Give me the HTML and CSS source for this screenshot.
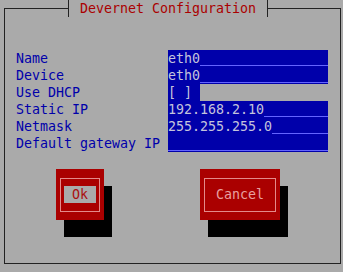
FILE: index.html
```html
<!DOCTYPE html>
<html lang="en">
<head>
    <meta charset="UTF-8">
    <meta name="viewport" content="width=device-width, initial-scale=1.0">
    <title>Devernet Configuration</title>
    <link rel="stylesheet" href="styles.css">
</head>
<body>

    <fieldset class="dialog">
        <legend class="dialog-title">Devernet Configuration</legend>

        <!-- Entry fields -->
        <div class="form">
            <div class="label">Name</div>
            <div class="field"><span class="value">eth0</span><span class="pad"></span></div>

            <div class="label">Device</div>
            <div class="field"><span class="value">eth0</span><span class="pad"></span></div>

            <div class="label">Use DHCP</div>
            <div class="field field-check"><span class="check">[ ]</span></div>

            <div class="label">Static IP</div>
            <div class="field"><span class="value">192.168.2.10</span><span class="pad"></span></div>

            <div class="label">Netmask</div>
            <div class="field"><span class="value">255.255.255.0</span><span class="pad"></span></div>

            <div class="label">Default gateway IP</div>
            <div class="field"><span class="value"></span><span class="pad"></span></div>
        </div>

        <!-- Buttons -->
        <div class="buttons">
            <div class="btn btn-focus"><div class="btn-frame"><span class="btn-label">Ok</span></div></div>
            <div class="btn"><div class="btn-frame"><span class="btn-label">Cancel</span></div></div>
        </div>
    </fieldset>

</body>
</html>
```

FILE: styles.css
```css
* {
    margin: 0;
    padding: 0;
    box-sizing: border-box;
}

body {
    width: 343px;
    height: 272px;
    overflow: hidden;
    background: #aaaaaa;
    font-family: 'DejaVu Sans Mono', monospace;
    font-size: 13.3px;
    line-height: 17px;
}

.dialog {
    margin: 0 2px 0 4px;
    height: 264px;
    border: 1px solid #222;
    min-width: 0;
}

.dialog-title {
    margin-left: 63px;
    padding: 0 11px;
    border-left: 1px solid #222;
    border-right: 1px solid #222;
    color: #aa0000;
    line-height: 17px;
}

.form {
    display: grid;
    grid-template-columns: 152px 160px;
    grid-auto-rows: 17px;
    margin: 33px 0 0 11px;
}

.label {
    color: #0000aa;
    white-space: pre;
}

.field {
    display: flex;
    background: #0000aa;
    color: #c4c4dc;
}

.value {
    white-space: pre;
}

.pad {
    flex: 1;
    height: 16px;
    border-bottom: 1px solid #6464ff;
}

.field-check {
    background: none;
}

.check {
    width: 32px;
    background: #0000aa;
    white-space: pre;
}

.buttons {
    display: flex;
    gap: 96px;
    margin: 17px 0 0 51px;
}

.btn {
    padding: 9px 4px 8px;
    background: #aa0000;
    box-shadow: 8px 17px 0 #000;
}

.btn-frame {
    padding: 7px 3px 8px;
    border: 1px solid #e48a8a;
}

.btn-label {
    display: block;
    padding: 0 8px;
    color: #e8a0a0;
}

.btn-focus .btn-label {
    background: #aaaaaa;
    color: #aa1010;
}
```
